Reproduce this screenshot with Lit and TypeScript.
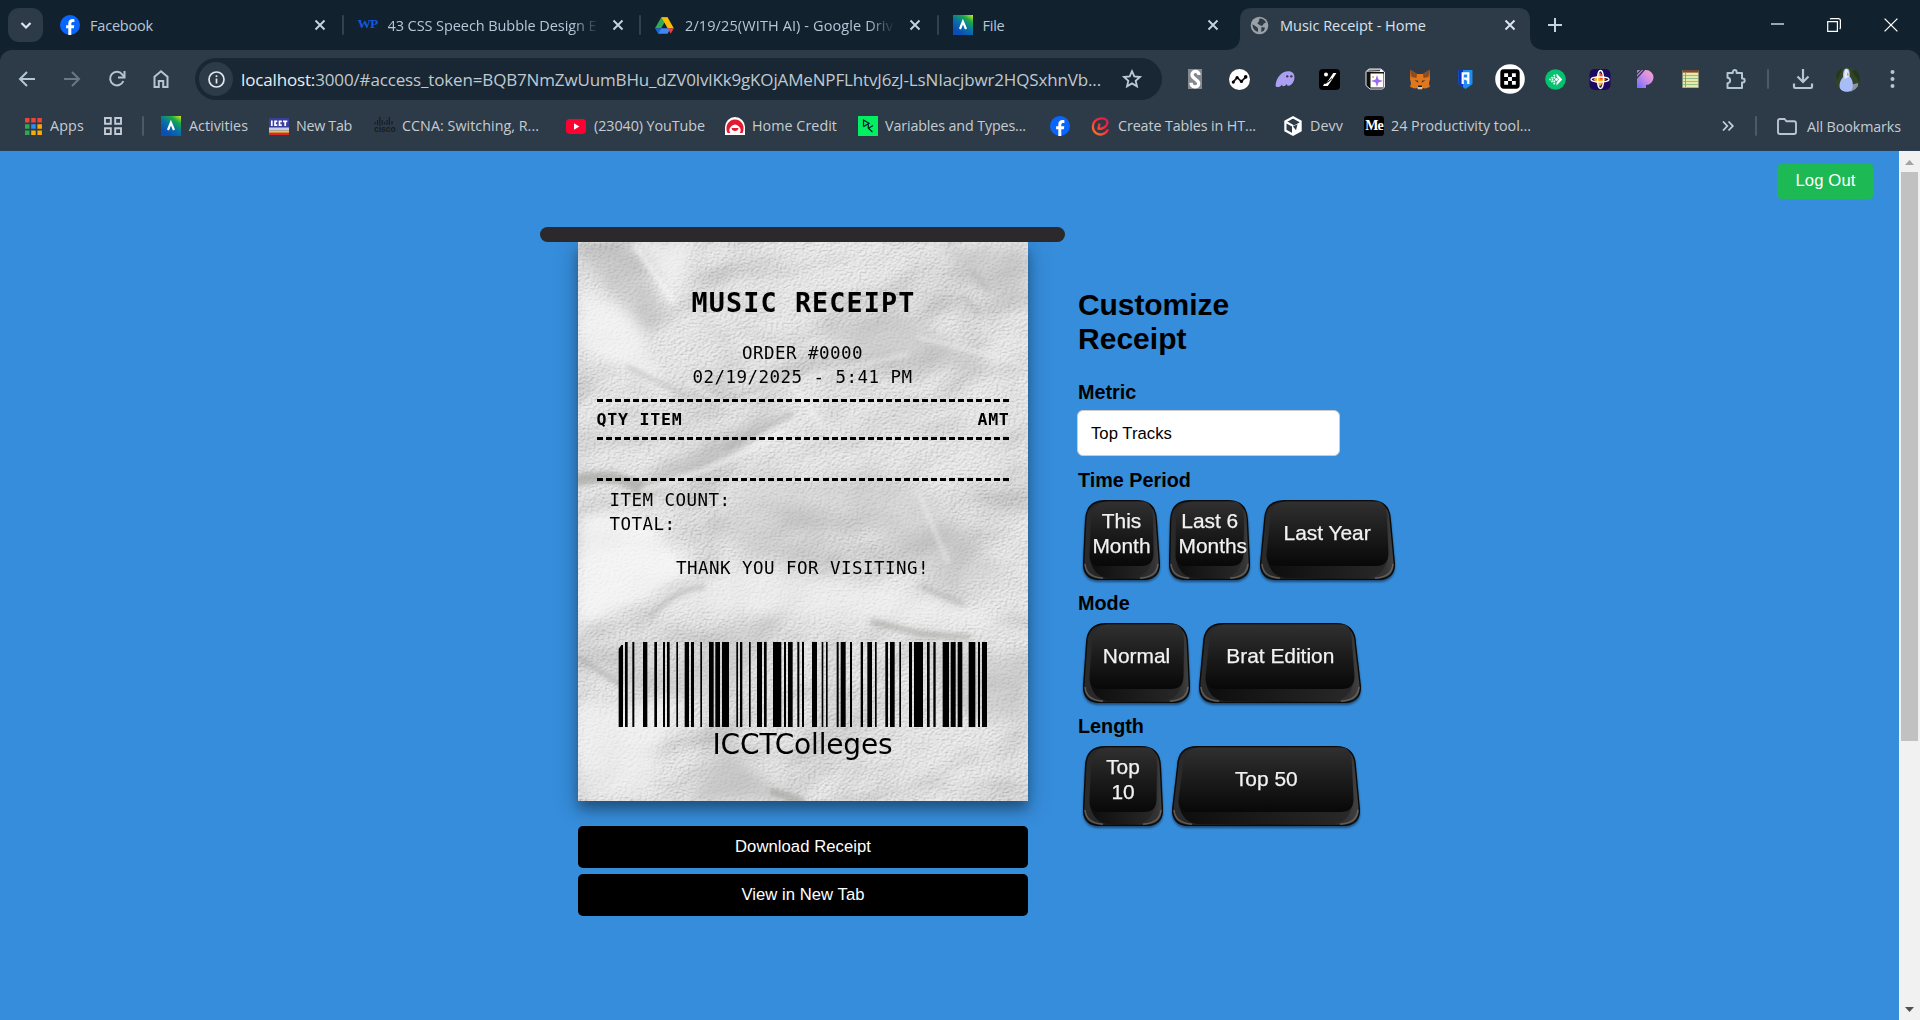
import { LitElement, html, css, svg } from "lit";
import { customElement } from "lit/decorators.js";

const icon = (w: number, h: number, vb: string, body: unknown) =>
  html`<svg class="ic" width=${w} height=${h} viewBox=${vb}>${body}</svg>`;

const facebook = icon(20, 20, "0 0 20 20", svg`
  <circle cx="10" cy="10" r="10" fill="#0866ff"/>
  <path d="M8.3 20v-6.7H6.1v-3h2.2V8.6c0-3.1 1.5-4.6 4.4-4.6.6 0 1.2.1 1.7.2v2.7h-1.2c-1.4 0-1.9.6-1.9 1.8v1.6h3l-.5 3h-2.5V20z" fill="#fff"/>`);
const netacad = icon(20, 20, "0 0 20 20", svg`
  <defs><linearGradient id="na" x1="1" y1="0" x2="0.35" y2="0.9"><stop offset="0" stop-color="#d8ea1a"/><stop offset=".3" stop-color="#18a84a"/><stop offset=".62" stop-color="#0873a8"/><stop offset="1" stop-color="#0a4fb5"/></linearGradient></defs>
  <rect width="20" height="20" fill="url(#na)"/><path d="M7 14 9.9 6.6 13 14" fill="none" stroke="#fff" stroke-width="2.2"/>`);
const wp = html`<span class="wp">WP</span>`;
const drive = icon(19, 17, "0 0 19 17", svg`
  <path d="M6.3 0h6.2L6.2 11H0z" fill="#34a853" transform="translate(0 .3)"/>
  <path d="M6.4.3h6.2l6.2 10.9h-6.2z" fill="#fbbc04"/>
  <path d="M0 11.2 3.2 16.8 6.4 11.2z" fill="#1967d2"/>
  <path d="M6.2 11.2h9.5l-3.2 5.6H3.1z" fill="#4285f4"/>
  <path d="M12.7 11.2h6.2l-3.2 5.5z" fill="#ea4335"/>`);
const globe = icon(19, 19, "0 0 19 19", svg`
  <circle cx="9.5" cy="9.5" r="8.8" fill="#9aa0a6"/>
  <path d="M2.5 8.3 6 10.6 8 12.2v3.6c-3.2-.6-5.6-3.600-5.500-7.500zM9.500 2.600c2.500-.2 5.200 1 6.500 3.900l-2.200 1.100-1.600 2.500-2.700-1L7.300 7.200 8.800 5.400zM11.500 11l3.600.7-1.300 3-2.600 1.200z" fill="#2d3b48"/>`);
const close = (c: string) => icon(12, 12, "0 0 12 12", svg`<path d="M1.500 1.500l9 9M10.500 1.500l-9 9" stroke=${c} stroke-width="1.900"/>`);

const line = "#b9c5d0";
const back = icon(20, 20, "0 0 20 20", svg`<path d="M18 10H3.500M10 3 3 10l7 7" fill="none" stroke="#b4c5d5" stroke-width="2"/>`);
const forward = icon(20, 20, "0 0 20 20", svg`<path d="M2 10h14.500M10 3l7 7-7 7" fill="none" stroke="#6b7884" stroke-width="2"/>`);
const reload = icon(20, 20, "0 0 20 20", svg`<path d="M16.300 12A6.800 6.800 0 1 1 15.200 5.300L17.200 7.600" fill="none" stroke="#b4c5d5" stroke-width="2"/><path d="M17.500 2v6.500H11" fill="none" stroke="#b4c5d5" stroke-width="2"/>`);
const home = icon(20, 20, "0 0 20 20", svg`<path d="M3.500 18V7.700L10 2.300l6.500 5.400V18h-4.300v-6H7.800v6z" fill="none" stroke="#b4c5d5" stroke-width="2"/>`);
const star = icon(22, 22, "0 0 24 24", svg`<path d="M12 3.500l2.500 5.700 6.200.6-4.700 4.100 1.400 6.100-5.400-3.200L6.600 20 8 13.900 3.300 9.800l6.200-.6z" fill="none" stroke="#bccad7" stroke-width="2"/>`);

const extensions = [
  icon(14, 20, "0 0 14 20", svg`<rect width="14" height="20" fill="#85898d"/><path d="M11 6C11 1.200 4 1.200 4 5.800c0 4.200 6.700 4.500 6.700 8.800C10.700 19 3 19 3 13.800" fill="none" stroke="#fff" stroke-width="3.300"/>`),
  icon(21, 21, "0 0 22 22", svg`<circle cx="11" cy="11" r="11" fill="#fff"/><path d="M4.500 13.500 8.500 9l4.500 4 4.500-4.500" fill="none" stroke="#111" stroke-width="1.800"/><circle cx="4.500" cy="13.700" r="1.700"/><circle cx="8.500" cy="9" r="1.700"/><circle cx="13" cy="13" r="1.700"/><circle cx="17.500" cy="8.300" r="1.900"/>`),
  icon(22, 18, "0 0 23 20", svg`<path d="M1 17C2 8 8 1.500 15 1.500c5 0 7 3 7 6.500 0 6-4 9.500-7 9.500-1.500 0-1.500-1.500-1.800-2-1 1.500-2 2.500-3.500 2.500s-1.500-1.500-1.500-2C6.700 18 5.500 19 3.500 19 1.500 19 1 18.200 1 17z" fill="#ab9ff2"/><circle cx="14" cy="7" r="1.300" fill="#3c315b"/><circle cx="18.500" cy="7" r="1.300" fill="#3c315b"/>`),
  icon(21, 21, "0 0 21 21", svg`<rect width="21" height="21" rx="4"/><path d="M14.300 4H17.500L8.800 17H4L5.200 14.800H7.200z" fill="#fff"/><path d="M8.500 13.500 13 9.500" stroke="#000" stroke-width="1"/><circle cx="7" cy="5.500" r="2" fill="#fff"/>`),
  icon(22, 22, "0 0 22 22", svg`<path d="M2 3.500 5 1h12l3.500 3v15l-2 2H6l-4-3.500z" fill="#111" stroke="#e8e8e8" stroke-width="1"/><path d="M2.500 3.500 5.500 1.500H17L20 4H6.500z" fill="#fff"/><path d="M4.500 3l11.500-.3" stroke="#111"/><rect x="6.500" y="5.500" width="13" height="14" fill="#fff"/><path d="M13 7l1.400 4.600L19 13l-4.600 1.400L13 19l-1.400-4.600L7 13l4.600-1.400z" fill="#9b6cf0"/><circle cx="9" cy="9" r="1" fill="#f5a623"/>`),
  icon(22, 21, "0 0 22 21", svg`<path d="M1.500 1 8 5h6l6.500-4 .5 9-1 4 .8 4-4.500 1.500L14 19l-1 1.500H9L8 19l-2.300.5L1.200 18 2 14 1 10z" fill="#e2761b"/><path d="M1.500 1 8 5l-.6 4L2.500 8zM20.500 1 14 5l.6 4 4.900-1z" fill="#8f4a1e"/><path d="M5.500 11l3.500.7.300 2zM16.500 11l-3.500.7-.3 2z" fill="#233447"/><path d="M8.500 17.500h5L13 20H9z" fill="#d7c1b3"/><path d="M9.300 16.500h3.400l.4 1.400H8.900z" fill="#161616"/>`),
  icon(15, 20, "0 0 15 20", svg`<path d="M.5 1h14v14L7.500 20l-7-5z" fill="#1a8cf2"/><path d="M.5 1H5v17.500L.5 15z" fill="#0b32c4"/><path d="M4.700 15V4.300h5.600v5.400H6M8 10.500h2.300V15" fill="none" stroke="#fff" stroke-width="2.200"/>`),
  icon(30, 30, "0 0 31 31", svg`<circle cx="15.500" cy="15.500" r="15.300" fill="#fff"/><rect x="5.500" y="5.500" width="20" height="20" rx="3.500"/><path d="M9.500 9.500h4v4h-4zM17.500 9.500h4v4h-4zM13.500 13.500h4v4h-4zM9.500 17.500h4v4h-4zM17.500 17.500h4v4h-4z" fill="#fff"/>`),
  icon(21, 21, "0 0 21 21", svg`<circle cx="10.500" cy="10.500" r="10.300" fill="#06c270"/><path d="M11.500 4.500 17.300 10.500 11.500 16.500V13.500L14 10.500 11.500 7.500z" fill="#fff"/><g fill="#fff"><circle cx="9.300" cy="6.500" r="1"/><circle cx="9.300" cy="14.500" r="1"/><circle cx="11.500" cy="10.500" r="1.400"/><circle cx="9.300" cy="8.700" r="1"/><circle cx="9.300" cy="12.300" r="1"/><circle cx="7" cy="8.600" r=".9"/><circle cx="7" cy="12.400" r=".9"/><circle cx="7.500" cy="10.500" r=".9"/><circle cx="5" cy="10.500" r=".9"/></g>`),
  icon(22, 21, "0 0 22 21", svg`<rect x=".5" width="21" height="21" rx="5" fill="#1b0a5e"/><path d="M11 3.500 16.500 10.500 11 17.500 4.500 10.500z" fill="#ffab1a"/><path d="M11 3.500 16.500 10.500H11z" fill="#f4511e"/><ellipse cx="11" cy="10.500" rx="9" ry="2.500" fill="none" stroke="#fff" stroke-width="1.300"/><ellipse cx="11.500" cy="10.500" rx="3" ry="9" fill="none" stroke="#fff" stroke-width="1.300"/>`),
  icon(18, 20, "0 0 18 20", svg`<defs><linearGradient id="pu" x1="1" y1="0" x2="0" y2="1"><stop offset="0" stop-color="#ffa8c8"/><stop offset=".5" stop-color="#c98be8"/><stop offset="1" stop-color="#6f6bff"/></linearGradient></defs><path d="M1 1h9a7.500 7.500 0 0 1 0 15v3H1z" fill="url(#pu)"/><path d="M0 6 6 0M0 10 9 0M0 2 2 0" stroke="#2d3b48" stroke-width="1.300"/>`),
  icon(17, 18, "0 0 17 18", svg`<rect x=".5" y=".5" width="16" height="17" fill="#e9e8a8"/><rect x=".5" width="16" height="2.600" fill="#7b4a33"/><path d="M1 5.500h15M1 8.500h15M1 11.500h15M1 14.500h15" stroke="#8fbf8a" stroke-width="1"/><path d="M3.500 3v14.500" stroke="#e07b5a"/><path d="M.5 17.500h16" stroke="#d8a45c"/>`),
  icon(22, 22, "0 0 22 22", svg`<path d="M2.500 5h5.300V4a1.900 1.900 0 0 1 3.800 0v1h5.400v5.600h.8a1.900 1.900 0 0 1 0 3.800h-.8V20H2.500v-4.800c3.500-.3 3.500-5.100 0-5.400z" fill="none" stroke="#b4c5d5" stroke-width="2" stroke-linejoin="round"/>`),
];

const download = icon(22, 22, "0 0 22 22", svg`<path d="M11 1v12.500M5.500 8.500l5.500 5.500 5.500-5.500M2 15.500v3.300q0 1.200 1.200 1.200h15.600q1.200 0 1.200-1.200v-3.300" fill="none" stroke="#b4c5d5" stroke-width="2.200"/>`);
const avatar = icon(25, 25, "0 0 25 25", svg`<defs><clipPath id="av"><circle cx="12.500" cy="12.500" r="12.300"/></clipPath></defs><g clip-path="url(#av)"><rect width="25" height="25" fill="#33432a"/><path d="M0 0h8L2 14zM17 4l8 12V2z" fill="#24361c"/><path d="M15 18l8-2v9h-8z" fill="#8a949c"/><path d="M11.500 1.500c3 0 3.500 3.500 3.300 8 2.500 3 3.200 6 3 9 0 4-2 6.500-6 6.500s-7-2-7.300-6c0-4 1.500-6.500 3.500-9 0-4.500.5-8.500 3.500-8.500z" fill="#a8bdf7"/><path d="M11 2c2 0 3 3 2.600 8L9.500 12c-.5-5 0-9 1.500-10z" fill="#e6ebfa"/><path d="M12 5v4l2-1z" fill="#d9a33b"/></g>`);

const appsGrid = icon(17, 17, "0 0 17 17", svg`
  <path d="M0 0h4.500v4.500H0zM6.200 0h4.500v4.500H6.200zM12.400 0h4.500v4.500h-4.500z" fill="#f04438"/>
  <path d="M0 6.200h4.500v4.500H0zM0 12.400h4.500v4.500H0z" fill="#2fa84f"/>
  <path d="M6.200 6.200h4.500v4.500H6.200z" fill="#2b8ef5"/>
  <path d="M12.400 6.200h4.500v4.500h-4.500zM12.400 12.400h4.500v4.500h-4.500zM6.200 12.400h4.500v4.500H6.200z" fill="#fbab05"/>`);
const squares = icon(18, 18, "0 0 18 18", svg`<path d="M1 1h5.800v5.800H1zM11.200 1H17v5.800h-5.800zM1 11.200h5.800V17H1zM11.200 11.200H17V17h-5.800z" fill="none" stroke="#c3ccd4" stroke-width="1.900"/>`);
const icct = icon(20, 17, "0 0 20 17", svg`<rect width="20" height="12.500" fill="#3b3f9c"/><rect y="12.500" width="20" height="2.300" fill="#f4c430"/><rect y="14.800" width="20" height="2.200" fill="#e0262d"/><rect y="9.500" width="20" height="3" fill="#c9cbe8"/><path d="M2.800 2.500v5.500M8.300 3.300H6v3.900h2.300M12.800 3.300h-2.300v3.900h2.300M14 3.300h4.300M16.200 3.300v4.700" fill="none" stroke="#fff" stroke-width="1.700"/>`);
const cisco = html`<span class="cisco">${icon(19, 8, "0 0 19 8", svg`<path d="M1 5v2.500M3.500 3v5M5.800 0v8M8.200 3v5M10.500 5v2.500M13 3v5M15.300 0v8M18 4v3.500" stroke="#151c22" stroke-width="1.100"/>`)}<b>cisco</b></span>`;
const youtube = icon(20, 15, "0 0 20 15", svg`<rect width="20" height="15" rx="3.800" fill="#ff0033"/><path d="M8 4.300v6.400l5.300-3.200z" fill="#fff"/>`);
const homeCredit = icon(20, 18, "0 0 20 18", svg`<path d="M0 18V10a10 10 0 0 1 20 0v8z" fill="#fff"/><path d="M2.500 16C-.500 10 3 2.500 10 2.500S20.500 10 17.500 16z" fill="#e11931"/><path d="M5.500 16.500a5.500 5.500 0 1 1 9 0z" fill="#fff"/><path d="M6.500 11h7q-.5 3-3.500 3t-3.500-3z" fill="#e11931"/>`);
const datacamp = icon(20, 20, "0 0 20 20", svg`<rect width="20" height="20" fill="#03ef62"/><path d="M5.500 10.500V4l5.500 3.300L5.500 10.700M15 9.500l-4.500 2.800 4 3.800M10.300 7.500v4.800" fill="none" stroke="#05192d" stroke-width="1.200"/>`);
const create = icon(19, 19, "0 0 19 19", svg`<defs><linearGradient id="cr" x1="0" y1="1" x2="1" y2="0"><stop offset="0" stop-color="#ff7a28"/><stop offset=".6" stop-color="#f5283a"/><stop offset="1" stop-color="#e0145c"/></linearGradient></defs><path d="M17 12.500C14.500 17.500 9 18.800 5 16 1 13 1 7 4 4c3-3 9-3.500 11.500-1 2 2.200.5 5.500-2.500 7.500-2 1.300-4 1.500-5.500 1.200L8.500 6.500" fill="none" stroke="url(#cr)" stroke-width="2.300" stroke-linejoin="round"/>`);
const devv = icon(18, 20, "0 0 18 20", svg`<path d="M9 1.200 16.600 5.500v9L9 18.800 1.400 14.500v-9z" fill="none" stroke="#fff" stroke-width="2.200"/><path d="M9 9.800 2 6M9 9.800V19" stroke="#fff" stroke-width="2"/><path d="M9 10l7.500-4v9L9 19z" fill="#fff"/><path d="M9 10.500l4.500-2.200-1.500 6z" fill="#2d3b48"/>`);
const medium = html`<span class="medium">Me</span>`;

/* [slot width, icon width, icon, label, label width] */
type Mark = [number, number, unknown, string, number];
const marks: Mark[] = [
  [108, 28, netacad, "Activities", 59],
  [105, 27, icct, "New Tab", 56],
  [192, 28, cisco, "CCNA: Switching, R...", 137],
  [159, 28, youtube, "(23040) YouTube", 111],
  [133, 27, homeCredit, "Home Credit", 85],
  [192, 27, datacamp, "Variables and Types...", 141],
  [41, 28, facebook, "", 0],
  [193, 27, create, "Create Tables in HT...", 138],
  [80, 26, devv, "Devv", 33],
  [180, 27, medium, "24 Productivity tool...", 140],
];

const tabs = [
  { icon: facebook, label: "Facebook", w: 63, fade: false },
  { icon: wp, label: "43 CSS Speech Bubble Design E", w: 209, fade: true },
  { icon: drive, label: "2/19/25(WITH AI) - Google Driv", w: 208, fade: true },
  { icon: netacad, label: "File", w: 22, fade: false },
];

const bars: [number, number][] = [
  [20, 33], [39, 47], [61, 67], [93, 106], [127, 135], [153, 159], [165, 173], [193, 198], [218, 231], [237, 246],
  [265, 270], [291, 305], [310, 324], [330, 351], [373, 378], [384, 391], [411, 416], [435, 450], [456, 464],
  [483, 508], [516, 522], [528, 542], [556, 562], [570, 576], [600, 615], [629, 634], [642, 647], [674, 680],
  [686, 701], [714, 720], [746, 753], [766, 780], [789, 794], [820, 828], [834, 848], [862, 867], [891, 900],
  [906, 933], [945, 953], [964, 971], [992, 1011], [1016, 1031], [1037, 1051], [1070, 1090], [1098, 1104], [1110, 1125],
];

/** Keycap: a body that widens toward its base, with an inset rounded face. */
const key = (w: number, inL: number, inR: number, lines: string[], cls = "") => {
  const t = 20, r = w - inR;
  const body = `M${inL + t} .7H${r - t}Q${r - 1} .7 ${r - 0.6} 21L${w - 0.6} 64Q${w - 0.6} 79.500 ${w - 18} 79.500H18Q.6 79.500 .6 64L${inL + 0.6} 21Q${inL + 1} .7 ${inL + t} .7z`;
  const fl = inL + 5, fr = r - 5;
  const face = `M${fl + 18} 1.500H${fr - 8}Q${fr + 1} 3 ${fr + 1} 20L${w - 6.5} 53Q${w - 6.5} 66 ${w - 19} 66H17Q6.500 66 6.500 54L${fl + 1} 20Q${fl + 2} 1.500 ${fl + 18} 1.500z`;
  return html`<button class="key" style="width:${w}px">
    <svg class="cap" width=${w} height="80" viewBox="0 0 ${w} 80">
      <defs>
        <linearGradient id="face" x1="0" y1="0" x2="0" y2="1"><stop offset="0" stop-color="#303030"/><stop offset=".5" stop-color="#1b1b1b"/><stop offset="1" stop-color="#080808"/></linearGradient>
        <linearGradient id="side" x1="0" y1="0" x2="1" y2="0"><stop offset="0" stop-color="#2b2b2b"/><stop offset=".5" stop-color="#1c1c1c"/><stop offset=".93" stop-color="#333"/><stop offset="1" stop-color="#434343"/></linearGradient>
        <linearGradient id="lip" x1="0" y1="0" x2="1" y2="0"><stop offset="0" stop-color="#0d0d0d"/><stop offset="1" stop-color="#292929"/></linearGradient>
      </defs>
      <path d=${body} fill="url(#side)" stroke="#0a0a0a" stroke-width="1.400"/>
      <path d="M${w - 20} 78.300Q${w - 3} 77 ${w - 2} 64" fill="none" stroke="#77706e" stroke-width="1.500" opacity=".7"/>
      <path d="M20 78.300Q3 77 2 64" fill="none" stroke="#77706e" stroke-width="1.500" opacity=".7"/>
      <path d="M6.500 56Q9 76 25 78H${w - 26}Q${w - 10} 76 ${w - 7} 56z" fill="url(#lip)"/>
      <path d=${face} fill="url(#face)"/>
    </svg>
    <span class="legend ${cls}">${lines.map((l) => html`<span>${l}</span>`)}</span>
  </button>`;
};

@customElement("app-root")
export class AppRoot extends LitElement {
  static styles = css`
    :host { display: flex; flex-direction: column; width: 1920px; height: 1020px; overflow: hidden; font-family: "Liberation Sans", Arial, sans-serif; background: #368ddb; }
    * { box-sizing: border-box; }
    .ic { display: block; flex: none; overflow: visible; }
    .ui { font-family: "Open Sans", "Noto Sans", sans-serif; white-space: nowrap; }
    .fit { display: inline-block; white-space: nowrap; }

    .strip { height: 50px; background: #11212d; display: flex; align-items: center; flex: none; padding-left: 8px; }
    .drop { width: 35px; height: 34px; border-radius: 11px; background: #2d3b48; display: grid; place-items: center; margin-right: 3px; }
    .tab { width: 297.500px; height: 50px; display: flex; align-items: center; padding-left: 14px; flex: none; font-size: 14.500px; color: #b6c7d8; }
    .fav { width: 30px; flex: none; display: flex; align-items: center; }
    .title { width: 224px; overflow: hidden; line-height: 26px; padding-top: 1px; }
    .title.fade .fit { -webkit-mask-image: linear-gradient(90deg, #000 88%, transparent 101%); mask-image: linear-gradient(90deg, #000 88%, transparent 101%); }
    .rule { width: 2px; height: 20px; border-radius: 1px; background: #33424f; margin-left: auto; }
    .tab.active { color: #d7e3ee; position: relative; }
    .active-bg { position: absolute; left: -9px; top: 0; z-index: 0; }
    .tab.active .fav, .tab.active .title, .tab.active > .x { position: relative; z-index: 1; }
    .wp { font: bold 13.500px "Liberation Serif", serif; color: #1257e0; letter-spacing: -.9px; margin-top: -3px; }
    .plus { margin-left: 14px; }
    .win { margin-left: auto; display: flex; align-items: center; padding-right: 22px; gap: 43px; }

    .chrome { background: #2d3b48; height: 100px; flex: none; border-radius: 12px 12px 0 0; }
    .chrome-wrap { background: #11212d; flex: none; }
    .bar { display: flex; height: 58px; align-items: center; }
    .nav { display: flex; width: 195px; padding-left: 5px; flex: none; }
    .nav > span { width: 44.700px; display: grid; place-items: center; }
    .omni { width: 967px; height: 42px; border-radius: 21px; background: #182733; display: flex; align-items: center; flex: none; padding-left: 4px; }
    .info { width: 34px; height: 34px; border-radius: 50%; background: #2d3b48; display: grid; place-items: center; }
    .url { font-size: 17px; color: #c0c9d1; width: 880px; margin-left: 8px; line-height: 30px; padding-top: 1px; }
    .host { color: #e8eef4; }
    .ext { display: flex; margin-left: 10px; }
    .ext > span { width: 45.100px; display: grid; place-items: center; }
    .sep { width: 2px; height: 20px; background: #4a5a68; flex: none; border-radius: 1px; }
    .tail { display: flex; align-items: center; margin-left: 9px; }

    .marks { display: flex; align-items: center; height: 36px; font-size: 14.300px; color: #c6ccd2; }
    .mark { display: flex; align-items: center; flex: none; line-height: 24px; }
    .mark .mi { flex: none; display: flex; }
    .mark .fit { margin-top: -1px; }
    .cisco { display: flex; flex-direction: column; color: #151c22; font-family: "Liberation Sans", sans-serif; font-size: 8.500px; line-height: 8px; margin-top: -3px; }
    .medium { width: 20px; height: 20px; background: #000; border-radius: 3px; color: #fff; font: bold 14px/20px "Liberation Serif", serif; letter-spacing: -1px; display: flex; justify-content: center; }

    .view { flex: 1; display: flex; min-height: 0; border-top: 1px solid #2a3f55; }
    .page { flex: 1; display: flex; flex-direction: column; background: #368ddb; }
    .top { height: 76px; display: flex; justify-content: flex-end; padding: 13px 25px 0 0; flex: none; }
    .logout { width: 97px; height: 35px; border: 0; border-radius: 5px; background: #1db954; color: #fff; font: 16.670px/32px "Liberation Sans", Arial, sans-serif; padding: 0 0 1px; }
    .content { display: flex; padding-left: 540px; align-items: flex-start; }
    .left { width: 525px; display: flex; flex-direction: column; align-items: center; }
    .slot { width: 525px; height: 15px; border-radius: 7.500px; background: #2b292b; position: relative; z-index: 1; }
    .receipt { width: 450px; height: 559px; padding: 45px 19px 0; position: relative; background: #e2e2e2; box-shadow: 0 8px 12px rgba(0,0,0,.34), 0 6px 26px rgba(0,0,0,.17); display: flex; flex-direction: column; align-items: center; font-family: "DejaVu Sans Mono", monospace; font-size: 17.500px; line-height: 24px; color: #000; clip-path: inset(0 -60px -60px -60px); }
    .receipt > :not(.paper) { position: relative; }
    .paper { position: absolute; inset: 0; }
    .h { font-size: 26.700px; line-height: 32px; font-weight: bold; margin: 0 0 22px 2px; }
    .dash { width: 412px; height: 3px; flex: none; background: repeating-linear-gradient(90deg, #000 0 6px, transparent 6px 9.020px); }
    .row { width: 413px; display: flex; justify-content: space-between; font-weight: bold; font-size: 16.600px; margin: 6px 0 5px 1px; }
    .sum { align-self: flex-start; margin: 7px 0 20px 13px; display: flex; flex-direction: column; align-items: flex-start; }
    .bars { display: block; margin-top: 62px; flex: none; }
    .code { font: 28px/32px "DejaVu Sans", sans-serif; margin-top: 2px; }
    .black { width: 450px; height: 42px; border: 0; border-radius: 5px; background: #000; color: #fff; font: 16.670px/40px "Liberation Sans", Arial, sans-serif; padding: 0 0 0 1px; margin-top: 6px; }
    .black.first { margin-top: 25px; }

    .controls { margin-left: 13px; padding-top: 61px; display: flex; flex-direction: column; align-items: flex-start; color: #000; }
    h2 { margin: 0 0 24px; font-size: 30px; line-height: 34px; display: flex; flex-direction: column; align-items: flex-start; }
    h3 { margin: 0; font-size: 19.800px; line-height: 24px; }
    .select { margin: 6px 0 12px -1px; width: 263px; height: 46px; border: 1px solid #ccc; border-radius: 6px; background: #fff; font-size: 16.670px; line-height: 45px; padding-left: 13px; }
    .keys { display: flex; gap: 9.300px; margin: 8px 0 11px 5px; }
    .key { position: relative; height: 80px; padding: 0 0 13px; border: 0; background: none; display: flex; align-items: center; justify-content: center; flex: none; filter: drop-shadow(0 2px 1px rgba(0,0,0,.45)); }
    .cap { position: absolute; left: 0; top: 0; }
    .legend { position: relative; display: flex; flex-direction: column; align-items: center; font: 20.900px/24.500px "Liberation Sans", Arial, sans-serif; color: #f2f2f2; -webkit-text-stroke: .25px #f2f2f2; white-space: nowrap; }
    .legend.nudge { padding-left: 6px; }
    .legend.nudge > :first-child { margin-left: -6px; }

    .scroll { width: 21px; background: #f1f1f1; display: flex; flex-direction: column; align-items: center; padding: 9px 0 8px; flex: none; }
    .thumb { width: 17px; height: 569px; background: #c1c1c1; margin-top: 7px; margin-bottom: auto; }
  `;

  /** Spreads each measured label over its set width by letter spacing. */
  firstUpdated() {
    this.renderRoot.querySelectorAll<HTMLElement>(".fit").forEach((el) => {
      const want = Number(el.dataset.w);
      const count = (el.textContent ?? "").length;
      if (want && count) el.style.letterSpacing = `${(want - el.getBoundingClientRect().width) / count}px`;
    });
  }

  private fit(t: unknown, w: number, cls = "") {
    return html`<span class="fit ${cls}" data-w=${w}>${t}</span>`;
  }

  private paper() {
    return html`<svg class="paper" width="450" height="559" viewBox="0 0 450 559">
      <defs>
        <filter id="crumple" x="0" y="0" width="100%" height="100%" color-interpolation-filters="sRGB">
          <feTurbulence type="fractalNoise" baseFrequency="0.008 0.01" numOctaves="3" seed="14"/>
          <feDiffuseLighting surfaceScale="22" diffuseConstant="1.080" lighting-color="#f0f0f0"><feDistantLight azimuth="235" elevation="62"/></feDiffuseLighting>
        </filter>
        <filter id="grain" x="0" y="0" width="100%" height="100%" color-interpolation-filters="sRGB">
          <feTurbulence type="fractalNoise" baseFrequency="0.35 0.55" numOctaves="3" seed="4"/>
          <feDiffuseLighting surfaceScale="1.400" diffuseConstant="1.080" lighting-color="#e6e6e6"><feDistantLight azimuth="235" elevation="62"/></feDiffuseLighting>
        </filter>
        <filter id="soft" x="-20%" y="-20%" width="140%" height="140%"><feGaussianBlur stdDeviation="7"/></filter>
        <filter id="crease" x="-20%" y="-50%" width="140%" height="200%"><feGaussianBlur stdDeviation="2"/></filter>
      </defs>
      <rect width="450" height="559" fill="#e2e2e2"/>
      <rect width="450" height="559" filter="url(#crumple)" opacity=".35"/>
      <rect width="450" height="559" filter="url(#grain)" opacity=".35"/>
      <g filter="url(#soft)">
        <path d="M58 0h60l-22 60zM0 45l60 30 25 70-85-40z" fill="#f6f6f6" opacity=".7"/>
        <path d="M0 10l50-10 40 75-20 20z" fill="#b4b4b4" opacity=".45"/>
        <path d="M60 240l150-80-60 60-80 30z" fill="#b0b0b0" opacity=".55"/>
        <path d="M360 5h90v60l-45-15z" fill="#b8b8b8" opacity=".45"/>
        <path d="M240 90l80-20 100 60-120-10z" fill="#b9b9b9" opacity=".5"/>
        <path d="M220 245l60-20 80 30 30 60-90-20z" fill="#c4c4c4" opacity=".4"/>
        <path d="M0 270h60l60 60-120 60z" fill="#f8f8f8" opacity=".75"/>
        <path d="M70 360l90-35 170 20 110 40-130-5-170-10z" fill="#f4f4f4" opacity=".55"/>
        <path d="M140 255l60-30 80 70-60-10z" fill="#c0c0c0" opacity=".35"/>
        <path d="M120 280l60 40 90 5-40-60z" fill="#b8b8b8" opacity=".35"/>
        <path d="M0 400l60 50 90 10 60-90-60 20-60 40z" fill="#b5b5b5" opacity=".4"/>
        <path d="M130 490l40-20-60 89h110l-30-20z" fill="#b4b4b4" opacity=".6"/>
        <path d="M330 400l120 20v60l-60-10z" fill="#b6b6b6" opacity=".4"/>
        <path d="M300 300l70-20 60 50-60 20z" fill="#bcbcbc" opacity=".4"/>
        <path d="M0 460l100 0-30 90H0z" fill="#f6f6f6" opacity=".6"/>
      </g>
      <g filter="url(#crease)" fill="none" stroke-linecap="round">
        <path d="M0 238Q35 230 62 245" stroke="#a2a29d" stroke-width="12" opacity=".65"/>
        <path d="M64 248Q130 232 205 190" stroke="#f8f8f8" stroke-width="5" opacity=".6"/>
        <path d="M150 205L212 172" stroke="#a8a8a8" stroke-width="7" opacity=".45"/>
        <path d="M50 125L105 152" stroke="#a8a8a8" stroke-width="4" opacity=".45"/>
        <path d="M395 30L410 48M385 55L400 70" stroke="#a8a8a8" stroke-width="4" opacity=".4"/>
        <path d="M72 375Q95 348 125 345" stroke="#aaa" stroke-width="4" opacity=".6"/>
        <path d="M295 380L345 392 390 395" stroke="#a5a5a0" stroke-width="6" opacity=".6"/>
        <path d="M345 345L385 362" stroke="#aaa" stroke-width="5" opacity=".5"/>
        <path d="M0 415L42 442" stroke="#aaa" stroke-width="5" opacity=".6"/>
        <path d="M110 140L150 165 210 140 330 112M215 145l30 40" stroke="#f8f8f8" stroke-width="3" opacity=".6"/>
        <path d="M340 95L440 120M340 250L370 320" stroke="#f6f6f6" stroke-width="3" opacity=".6"/>
        <path d="M58 5l38 55" stroke="#fff" stroke-width="5" opacity=".5"/>
        <path d="M195 550l28 8" stroke="#9c9c98" stroke-width="7" opacity=".6"/>
      </g>
    </svg>`;
  }

  render() {
    return html`
      <div class="strip ui">
        <span class="drop">${icon(12, 9, "0 0 12 9", svg`<path d="M1.500 2 6 6.500 10.500 2" fill="none" stroke="#dce6ef" stroke-width="2.200"/>`)}</span>
        ${tabs.map((t, i) => html`<div class="tab">
          <span class="fav">${t.icon}</span>
          <span class="title ${t.fade ? "fade" : ""}">${this.fit(t.label, t.w)}</span>
          <span class="x">${close("#c6d4e1")}</span>
          ${i < 3 ? html`<span class="rule"></span>` : ""}
        </div>`)}
        <div class="tab active">
          <svg class="active-bg" width="320" height="50" viewBox="0 0 320 50"><path d="M0 50Q13 49 13 36V20Q13 8 25 8H291Q303 8 303 20V36Q303 49 317 50z" fill="#2d3b48"/></svg>
          <span class="fav">${globe}</span>
          <span class="title">${this.fit("Music Receipt - Home", 146)}</span>
          <span class="x">${close("#dce6ef")}</span>
        </div>
        <span class="plus">${icon(14, 14, "0 0 14 14", svg`<path d="M7 0v14M0 7h14" stroke="#c6d4e1" stroke-width="2"/>`)}</span>
        <div class="win">
          ${icon(13, 14, "0 0 13 14", svg`<path d="M0 6h13" stroke="#fff" stroke-width="1.200"/>`)}
          ${icon(14, 14, "0 0 14 14", svg`<path d="M.7 3.600h9.700v9.700H.7zM3 1.200q.5-.6 1.300-.6h7q2.100 0 2.100 2v7q0 .9-.6 1.500" fill="none" stroke="#fff" stroke-width="1.200"/>`)}
          ${icon(14, 14, "0 0 14 14", svg`<path d="M.6.6l12.800 12.800M13.400.6.6 13.400" stroke="#fff" stroke-width="1.300"/>`)}
        </div>
      </div>
      <div class="chrome-wrap"><div class="chrome ui">
        <div class="bar">
          <div class="nav"><span>${back}</span><span>${forward}</span><span>${reload}</span><span>${home}</span></div>
          <div class="omni">
            <span class="info">${icon(17, 17, "0 0 17 17", svg`<circle cx="8.500" cy="8.500" r="7.500" fill="none" stroke="#e1e8ee" stroke-width="1.700"/><path d="M8.500 7.500v5M8.500 4.300v1.800" stroke="#e1e8ee" stroke-width="1.700"/>`)}</span>
            <span class="url">${this.fit(html`<span class="host">localhost:</span>3000/#access_token=BQB7NmZwUumBHu_dZV0lvlKk9gKOjAMeNPFLhtvJ6zJ-LsNIacjbwr2HQSxhnVb...`, 860)}</span>
            ${star}
          </div>
          <div class="ext">${extensions.map((e) => html`<span>${e}</span>`)}</div>
          <div class="tail">
            <span class="sep"></span>
            <svg class="ic" width="23"></svg>${download}
            <svg class="ic" width="21"></svg>${avatar}
            <svg class="ic" width="30"></svg>${icon(5, 18, "0 0 5 18", svg`<g fill="#b4c5d5"><circle cx="2.500" cy="2" r="2"/><circle cx="2.500" cy="9" r="2"/><circle cx="2.500" cy="16" r="2"/></g>`)}
          </div>
        </div>
        <div class="marks">
          <svg class="ic" width="25"></svg>
          <div class="mark"><span class="mi">${appsGrid}</span><svg class="ic" width="8" height="1"></svg>${this.fit("Apps", 34)}</div>
          <svg class="ic" width="20"></svg>${squares}
          <svg class="ic" width="20"></svg><span class="sep"></span><svg class="ic" width="17"></svg>
          ${marks.map(([w, iw, ic, label, lw]) => html`<div class="mark" style="width:${w}px"><span class="mi" style="width:${iw}px">${ic}</span>${label ? this.fit(label, lw) : ""}</div>`)}
          <svg class="ic" width="178"></svg>
          ${icon(12, 12, "0 0 12 12", svg`<path d="M1 1.500 5.300 6 1 10.500M6.500 1.500 10.800 6l-4.300 4.500" fill="none" stroke="#c6d0d9" stroke-width="1.800"/>`)}
          <svg class="ic" width="21"></svg><span class="sep"></span><svg class="ic" width="20"></svg>
          ${icon(20, 17, "0 0 20 17", svg`<path d="M1 3q0-2 2-2h4.500l2 2.300H17q2 0 2 2V14q0 2-2 2H3q-2 0-2-2z" fill="none" stroke=${line} stroke-width="1.900"/>`)}
          <svg class="ic" width="10"></svg>${this.fit("All Bookmarks", 94)}
        </div>
      </div></div>
      <div class="view">
        <div class="page">
          <div class="top"><button class="logout">${this.fit("Log Out", 60)}</button></div>
          <div class="content">
            <div class="left">
              <div class="slot"></div>
              <div class="receipt">
                ${this.paper()}
                <div class="h">${this.fit("MUSIC RECEIPT", 224)}</div>
                <div>${this.fit("ORDER #0000", 121)}</div>
                <div>${this.fit("02/19/2025 - 5:41 PM", 220)}</div>
                <svg width="1" height="10"></svg>
                <div class="dash"></div>
                <div class="row">${this.fit("QTY ITEM", 86)}${this.fit("AMT", 32)}</div>
                <div class="dash"></div>
                <svg width="1" height="38"></svg>
                <div class="dash"></div>
                <div class="sum">${this.fit("ITEM COUNT:", 121)}${this.fit("TOTAL:", 66)}</div>
                <div>${this.fit("THANK YOU FOR VISITING!", 253)}</div>
                <svg class="bars" width="370" height="85" viewBox="18 0 1110 85" preserveAspectRatio="none">
                  ${bars.map(([a, b], i) => i === 0
                    ? svg`<path d="M${a} 85V7L${b - 5} 3H${b}V85z"/>`
                    : svg`<rect x=${a} y="0" width=${b - a} height="85"/>`)}
                </svg>
                <div class="code">${this.fit("ICCTColleges", 180)}</div>
              </div>
              <button class="black first">${this.fit("Download Receipt", 136)}</button>
              <button class="black">${this.fit("View in New Tab", 123)}</button>
            </div>
            <div class="controls">
              <h2>${this.fit("Customize", 151)}${this.fit("Receipt", 108.5)}</h2>
              <h3>Metric</h3>
              <div class="select">${this.fit("Top Tracks", 81)}</div>
              <h3>Time Period</h3>
              <div class="keys">${key(77, 2, 3, ["This", "Month"])}${key(81, 1, 2, ["Last 6", "Months"], "nudge")}${key(135, 4, 4, ["Last Year"])}</div>
              <h3>Mode</h3>
              <div class="keys">${key(107, 3, 2, ["Normal"])}${key(162, 4, 5, ["Brat Edition"])}</div>
              <h3>Length</h3>
              <div class="keys">${key(80, 2, 2, ["Top", "10"])}${key(188, 5, 4, ["Top 50"])}</div>
            </div>
          </div>
        </div>
        <div class="scroll">
          ${icon(9, 5, "0 0 9 5", svg`<path d="M0 5 4.500 0 9 5z" fill="#a3a3a3"/>`)}
          <div class="thumb"></div>
          ${icon(9, 5, "0 0 9 5", svg`<path d="M0 0 4.500 5 9 0z" fill="#505050"/>`)}
        </div>
      </div>
    `;
  }
}
